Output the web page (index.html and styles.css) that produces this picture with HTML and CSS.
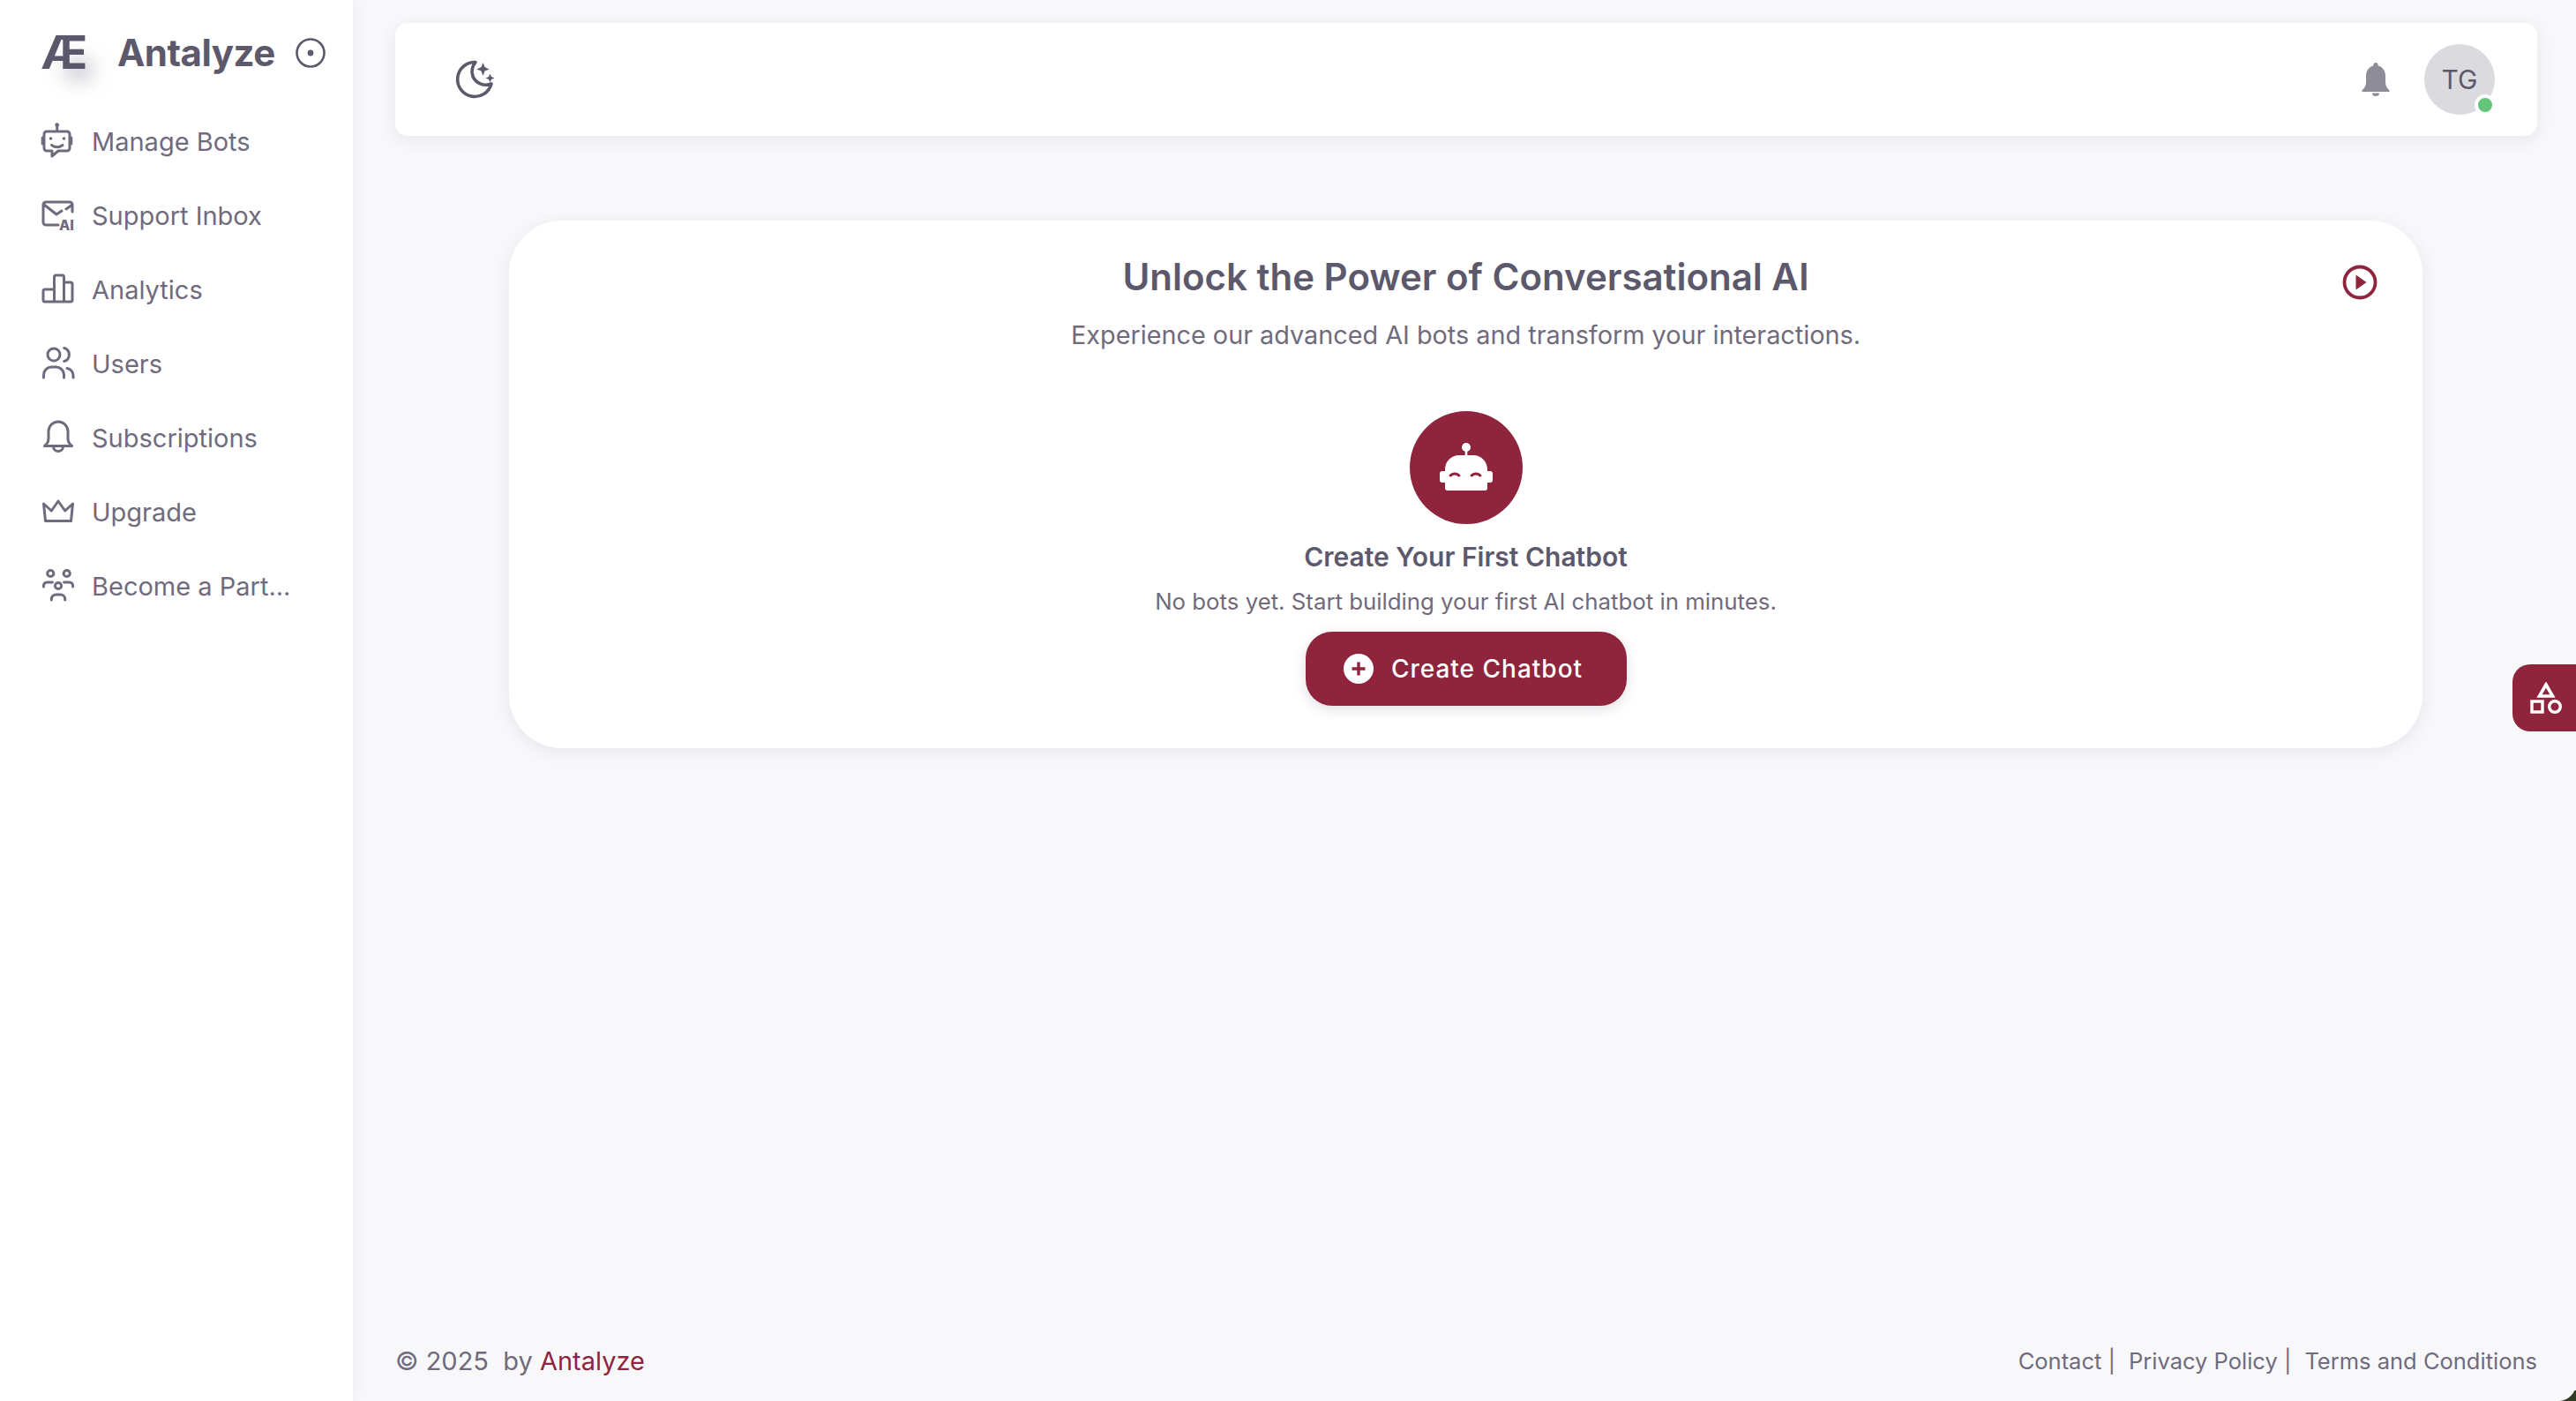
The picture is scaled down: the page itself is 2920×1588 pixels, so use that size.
FILE: index.html
```html
<!DOCTYPE html>
<html lang="en">
<head>
    <meta charset="UTF-8">
    <meta name="viewport" content="width=device-width, initial-scale=1.0">
    <title>Antalyze</title>
    <link rel="stylesheet" href="styles.css">
</head>
<body>
    <aside class="sidebar">
        <div class="brand">
            <span class="brand-mark">Æ</span>
            <span class="brand-name">Antalyze</span>
            <svg class="brand-toggle" viewBox="0 0 36 36"><circle cx="18" cy="18" r="15.5" fill="none" stroke="currentColor" stroke-width="2.6"/><circle cx="18" cy="18" r="3.4" fill="currentColor"/></svg>
        </div>
        <nav class="menu">
            <a class="menu-item">
                <svg class="menu-icon" viewBox="0 0 42 42"><circle cx="19.7" cy="2.6" r="2.4" class="solid"/><path d="M19.7 3v7M8 10h23a3 3 0 0 1 3 3v16a3 3 0 0 1-3 3H21l-7 6v-6H8a3 3 0 0 1-3-3V13a3 3 0 0 1 3-3zM5 17H3.2v7H5M34 17h1.800v7H34M13.500 25.500q6.200 4.500 12.500 0"/><circle cx="12.500" cy="18" r="1.800" class="solid"/><circle cx="27.500" cy="18" r="1.800" class="solid"/></svg>
                <span>Manage Bots</span>
            </a>
            <a class="menu-item">
                <svg class="menu-icon" viewBox="0 0 42 42"><path d="M37 17v-8a3 3 0 0 0-3-3H7a3 3 0 0 0-3 3v20a3 3 0 0 0 3 3h14M5 9l14 11 6-4M37 9l-7 5"/><text x="22" y="38" class="icon-text">AI</text></svg>
                <span>Support Inbox</span>
            </a>
            <a class="menu-item">
                <svg class="menu-icon" viewBox="0 0 42 42"><path d="M16.500 35V21H6a2 2 0 0 0-2 2v10a2 2 0 0 0 2 2h29a2 2 0 0 0 2-2V15a2 2 0 0 0-2-2h-7.500M16.500 21V7a2 2 0 0 1 2-2h7a2 2 0 0 1 2 2v28"/></svg>
                <span>Analytics</span>
            </a>
            <a class="menu-item">
                <svg class="menu-icon" viewBox="0 0 42 42"><circle cx="16" cy="11" r="7"/><path d="M27.700 3.500a7.800 7.800 0 0 1 0 15M4.500 37v-3a9 9 0 0 1 9-9h5a9 9 0 0 1 9 9v3M31 26.500a8 8 0 0 1 7 8V37"/></svg>
                <span>Users</span>
            </a>
            <a class="menu-item">
                <svg class="menu-icon" viewBox="0 0 42 42"><path d="M21 3a11 11 0 0 1 11 11v8q0 5 4.500 8.500H5.500Q10 27 10 22v-8A11 11 0 0 1 21 3zM15.500 31a5.500 5.500 0 0 0 11 0"/></svg>
                <span>Subscriptions</span>
            </a>
            <a class="menu-item">
                <svg class="menu-icon" viewBox="0 0 42 42"><path d="M4.500 12l8.800 8L21 9l7.700 11 8.800-8-2 19.500H6.500z"/></svg>
                <span>Upgrade</span>
            </a>
            <a class="menu-item">
                <svg class="menu-icon" viewBox="0 0 42 42"><circle cx="12.300" cy="7" r="3.600"/><circle cx="30.700" cy="7" r="3.600"/><circle cx="21" cy="21" r="3.600"/><path d="M13.300 37v-1a5 5 0 0 1 5-5h5.400a5 5 0 0 1 5 5v1M4.400 22v-1a4 4 0 0 1 4-4h6M37.600 22v-1a4 4 0 0 0-4-4h-6"/></svg>
                <span>Become a Part...</span>
            </a>
        </nav>
    </aside>

    <div class="main">
        <header class="topbar">
            <svg class="moon" viewBox="0 0 46 46"><path d="M23 3.500A19.500 19.500 0 1 0 41 28c-9 3.500-18-1-21-8.500-2.500-6 0-12.500 3-16z" fill="none" stroke="currentColor" stroke-width="3.600" stroke-linejoin="round"/><path d="M31.500 4l2 5 5 2.500-5 2-2 5.500-2-5.500-5-2 5-2.500zM39.500 16.500l1.500 3.500 3.500 1.500-3.500 1.500-1.500 3.500-1.500-3.500-3.500-1.500 3.500-1.500z" fill="currentColor"/></svg>
            <div class="topbar-right">
                <svg class="bell" viewBox="0 0 32 38"><path d="M16 0a2.500 2.500 0 0 1 2.500 3.200C24 4.800 27 9.500 27 15v7q0 5.500 4.500 9.500 1 1.500-1 1.500h-29q-2 0-1-1.500Q5 27.500 5 22v-7C5 9.500 8 4.800 13.500 3.200A2.500 2.500 0 0 1 16 0zM12 34.500h8a4 3.500 0 0 1-8 0z" fill="currentColor"/></svg>
                <div class="avatar">TG<span class="status"></span></div>
            </div>
        </header>

        <section class="intro-card">
            <svg class="play" viewBox="0 0 40 40"><circle cx="20" cy="20" r="17.500" fill="none" stroke="currentColor" stroke-width="3.800"/><path d="M15.500 11.500l12 8.500-12 8.500z" fill="currentColor"/></svg>
            <h1>Unlock the Power of Conversational AI</h1>
            <p class="intro-sub">Experience our advanced AI bots and transform your interactions.</p>
            <div class="bot-circle">
                <svg viewBox="0 0 60 56"><circle cx="30" cy="5" r="5" fill="#fff"/><rect x="28.700" y="6" width="2.600" height="9" fill="#fff"/><path d="M6 30c0-9 7-16 16-16h16c9 0 16 7 16 16v2h3a3 3 0 0 1 3 3v7a3 3 0 0 1-3 3h-3v6a3 3 0 0 1-3 3H9a3 3 0 0 1-3-3v-6H3a3 3 0 0 1-3-3v-7a3 3 0 0 1 3-3h3z" fill="#fff"/><path d="M11.500 38a6.500 6.500 0 0 1 11 0M35.500 38a6.500 6.500 0 0 1 11 0" fill="none" stroke="#8f243d" stroke-width="3"/></svg>
            </div>
            <h2>Create Your First Chatbot</h2>
            <p class="empty-note">No bots yet. Start building your first AI chatbot in minutes.</p>
            <button class="create-btn">
                <svg viewBox="0 0 34 34"><circle cx="17" cy="17" r="17" fill="#fff"/><path d="M17 9.500v15M9.500 17h15" stroke="#8f243d" stroke-width="3.400"/></svg>
                Create Chatbot
            </button>
        </section>

        <footer class="footer">
            <div class="footer-left">© 2025 &nbsp;by <a class="brand-link">Antalyze</a></div>
            <div class="footer-links">
                <a>Contact |</a>
                <a>Privacy Policy |</a>
                <a>Terms and Conditions</a>
            </div>
        </footer>
    </div>

    <div class="side-tab">
        <svg viewBox="0 0 36 36"><path d="M18 3l7.500 13h-15z" fill="none" stroke="#fff" stroke-width="3.600"/><rect x="2" y="22" width="12" height="12" fill="none" stroke="#fff" stroke-width="3.400"/><circle cx="28" cy="28" r="6.300" fill="none" stroke="#fff" stroke-width="3.400"/></svg>
    </div>
    <div class="window-corner"></div>
</body>
</html>
```

FILE: styles.css
```css
* {
    box-sizing: border-box;
}
html, body {
    height: 100%;
}
body {
    margin: 0;
    display: flex;
    min-height: 100vh;
    overflow: hidden;
    font-family: Inter, "Liberation Sans", sans-serif;
    background-color: #f8f8fb;
    color: #6f6b7d;
}

/* Sidebar */
.sidebar {
    width: 400px;
    flex-shrink: 0;
    background-color: #fff;
    box-shadow: 0 0 14px rgba(75, 70, 92, 0.08);
    padding: 34px 0 0 45px;
    z-index: 2;
}
.brand {
    display: flex;
    align-items: center;
    height: 52px;
    color: #5d596c;
}
.brand-mark {
    position: relative;
    width: 87px;
    font-size: 52px;
    line-height: 52px;
    font-weight: 700;
    margin-left: 1px;
}
.brand-mark::after {
    content: "";
    position: absolute;
    left: 28px;
    top: 36px;
    width: 30px;
    height: 18px;
    border-radius: 50%;
    background-color: rgba(75, 70, 92, 0.5);
    filter: blur(12px);
}
.brand-name {
    font-size: 42px;
    font-weight: 700;
    line-height: 52px;
    letter-spacing: -0.5px;
}
.brand-toggle {
    width: 36px;
    height: 36px;
    margin-left: 22px;
}
.menu {
    margin-top: 32px;
}
.menu-item {
    display: flex;
    align-items: center;
    gap: 17px;
    height: 84px;
    font-size: 29px;
}
.menu-icon {
    width: 42px;
    height: 42px;
    flex-shrink: 0;
    fill: none;
    stroke: currentColor;
    stroke-width: 3;
    stroke-linecap: round;
    stroke-linejoin: round;
}
.menu-icon .solid {
    fill: currentColor;
    stroke: none;
}
.menu-icon .icon-text {
    fill: currentColor;
    stroke: none;
    font-size: 16px;
    font-weight: 800;
}

/* Main column */
.main {
    flex: 1;
    min-width: 0;
    display: flex;
    flex-direction: column;
    padding: 26px 44px 0 48px;
}
.topbar {
    display: flex;
    align-items: center;
    justify-content: space-between;
    height: 128px;
    padding: 0 48px 0 68px;
    background-color: #fff;
    border-radius: 14px;
    box-shadow: 0 4px 18px rgba(75, 70, 92, 0.1);
}
.moon {
    width: 46px;
    height: 46px;
    color: #5d596c;
}
.topbar-right {
    display: flex;
    align-items: center;
    gap: 39px;
}
.bell {
    width: 32px;
    height: 38px;
    color: #8e8c97;
}
.avatar {
    position: relative;
    width: 80px;
    height: 80px;
    display: flex;
    align-items: center;
    justify-content: center;
    border-radius: 50%;
    background-color: #dbdade;
    color: #5d596c;
    font-size: 30px;
}
.status {
    position: absolute;
    right: -1px;
    bottom: -1px;
    width: 16px;
    height: 16px;
    border-radius: 50%;
    background-color: #62c577;
    border: 4px solid #fff;
    box-sizing: content-box;
}

/* Intro card */
.intro-card {
    position: relative;
    margin: 96px 130px 0 129px;
    height: 598px;
    display: flex;
    flex-direction: column;
    align-items: center;
    padding-top: 37px;
    background-color: #fff;
    border-radius: 60px;
    box-shadow: 0 4px 18px rgba(75, 70, 92, 0.1);
}
.play {
    position: absolute;
    top: 50px;
    right: 51px;
    width: 40px;
    height: 40px;
    color: #8f243d;
}
.intro-card h1 {
    margin: 0;
    font-size: 42px;
    line-height: 54px;
    font-weight: 600;
    color: #5d596c;
}
.intro-sub {
    margin: 19px 0 0;
    font-size: 28.800px;
    line-height: 40px;
}
.bot-circle {
    width: 128px;
    height: 128px;
    margin-top: 66px;
    display: flex;
    align-items: center;
    justify-content: center;
    border-radius: 50%;
    background-color: #8f243d;
}
.bot-circle svg {
    width: 60px;
    height: 56px;
}
.intro-card h2 {
    margin: 18px 0 0;
    font-size: 30px;
    line-height: 38px;
    font-weight: 600;
    color: #5d596c;
}
.empty-note {
    margin: 15px 0 0;
    font-size: 25.800px;
    line-height: 34px;
}
.create-btn {
    display: flex;
    align-items: center;
    justify-content: center;
    gap: 20px;
    width: 364px;
    height: 84px;
    margin-top: 17px;
    padding: 0 6px 0 0;
    border: 0;
    border-radius: 30px;
    background-color: #8f243d;
    color: #fff;
    font-family: inherit;
    font-size: 28px;
    font-weight: 500;
    letter-spacing: 1px;
    box-shadow: 0 4px 14px rgba(75, 70, 92, 0.18);
}
.create-btn svg {
    width: 34px;
    height: 34px;
}

/* Footer */
.footer {
    display: flex;
    align-items: center;
    justify-content: space-between;
    margin-top: auto;
    height: 90px;
    padding-bottom: 1px;
}
.footer-left {
    font-size: 29px;
}
.brand-link {
    color: #8f243d;
}
.footer-links {
    display: flex;
    gap: 15px;
    font-size: 25.500px;
}

/* Floating tab on the right edge */
.side-tab {
    position: absolute;
    top: 753px;
    right: 0;
    width: 72px;
    height: 76px;
    display: flex;
    align-items: center;
    justify-content: center;
    padding-left: 3px;
    border-radius: 20px 0 0 20px;
    background-color: #8f243d;
}
.side-tab svg {
    width: 36px;
    height: 36px;
}

/* Rounded window corner, wallpaper shows through */
.window-corner {
    position: absolute;
    right: 0;
    bottom: 0;
    width: 20px;
    height: 12px;
    background: radial-gradient(circle at 0 -8px, transparent 19.500px, #2f3b1f 20.500px);
}
```
